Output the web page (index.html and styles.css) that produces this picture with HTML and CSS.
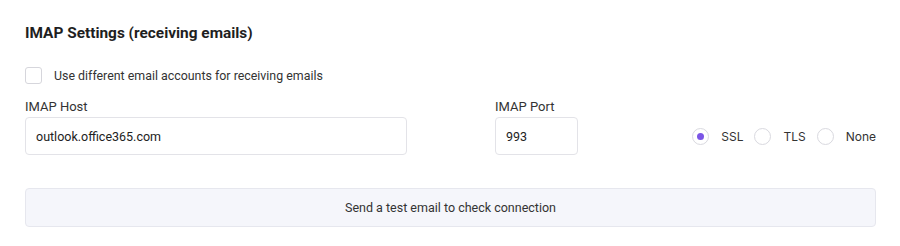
FILE: index.html
```html
<!DOCTYPE html>
<html lang="en">

<head>
    <meta charset="UTF-8">
    <meta name="viewport" content="width=device-width, initial-scale=1.0">
    <title>IMAP settings</title>
    <link rel="stylesheet" href="styles.css">
</head>

<body>
    <div class="section">
        <h2 class="title">IMAP Settings (receiving emails)</h2>
        <label class="check-row">
            <span class="checkbox"></span>
            <span>Use different email accounts for receiving emails</span>
        </label>
        <div class="fields">
            <div class="field host">
                <div class="label">IMAP Host</div>
                <div class="input">outlook.office365.com</div>
            </div>
            <div class="field port">
                <div class="label">IMAP Port</div>
                <div class="input">993</div>
            </div>
            <div class="radios">
                <label class="radio-item"><span class="radio checked"></span>SSL</label>
                <label class="radio-item"><span class="radio"></span>TLS</label>
                <label class="radio-item"><span class="radio"></span>None</label>
            </div>
        </div>
        <div class="test-btn">Send a test email to check connection</div>
    </div>
</body>
</html>
```

FILE: styles.css
```css
* {
    margin: 0;
    padding: 0;
    box-sizing: border-box;
}
body {
    font-family: Roboto, "Liberation Sans", sans-serif;
    background-color: #ffffff;
    color: #2b2b2b;
}
.section {
    padding: 24px 24px 0 25px;
}
.title {
    font-size: 15.4px;
    font-weight: 700;
    color: #1f1f1f;
    line-height: 18px;
}
.check-row {
    display: flex;
    align-items: center;
    gap: 12px;
    margin-top: 25px;
    font-size: 12.4px;
    color: #333;
}
.checkbox {
    width: 17px;
    height: 17px;
    border: 1px solid #d6d6dc;
    border-radius: 3px;
}
.fields {
    display: flex;
    margin-top: 15px;
}
.field {
    display: flex;
    flex-direction: column;
}
.host {
    width: 382px;
}
.port {
    width: 83px;
    margin-left: 88px;
}
.label {
    font-size: 13px;
    color: #333;
    line-height: 15px;
    margin-bottom: 3px;
}
.input {
    height: 38px;
    border: 1px solid #e3e3e8;
    border-radius: 4px;
    padding: 0 10px;
    display: flex;
    align-items: center;
    font-size: 12.5px;
    color: #222;
}
.radios {
    flex: 1;
    display: flex;
    justify-content: flex-end;
    align-items: center;
    gap: 11px;
    padding-top: 18px;
    font-family: Inter, Roboto, sans-serif;
    font-size: 12px;
    color: #333;
}
.radio-item {
    display: flex;
    align-items: center;
    gap: 12px;
}
.radio {
    width: 17px;
    height: 17px;
    border: 1px solid #d9d9df;
    border-radius: 50%;
    display: flex;
    align-items: center;
    justify-content: center;
}
.radio.checked::after {
    content: "";
    width: 7px;
    height: 7px;
    border-radius: 50%;
    background-color: #7b55e6;
}
.test-btn {
    margin-top: 33px;
    height: 39px;
    border: 1px solid #e6e7ee;
    border-radius: 4px;
    background-color: #f5f6fb;
    display: flex;
    align-items: center;
    justify-content: center;
    font-size: 12.5px;
    color: #333;
}
```
